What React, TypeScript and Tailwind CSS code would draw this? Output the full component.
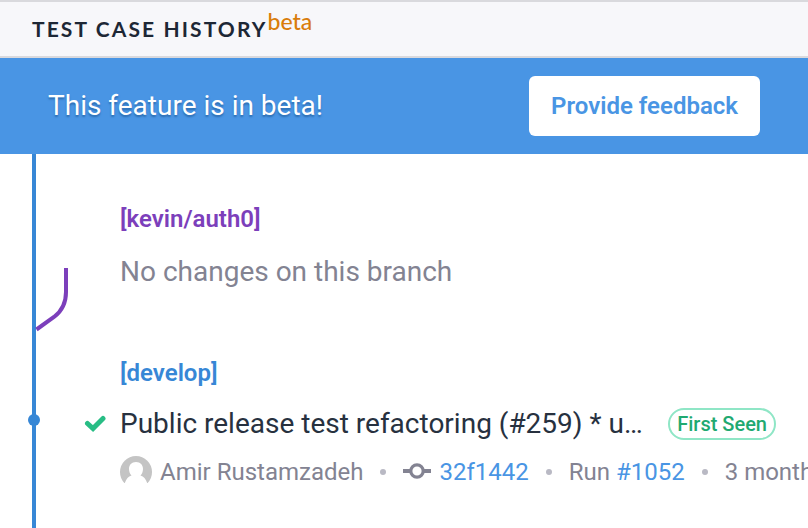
import React from "react";

function BranchGraph() {
  return (
    <svg className="w-[72px] shrink-0 self-stretch" aria-hidden="true">
      <rect x="32" y="0" width="4" height="100%" fill="#3787d6" />
      <circle cx="34" cy="266" r="6" fill="#3787d6" />
      <path
        d="M66 114V138C66 148 62 157 54 163L36.500 175.500"
        fill="none"
        stroke="#7c3fbb"
        strokeWidth="4"
      />
    </svg>
  );
}

function CheckIcon() {
  return (
    <svg viewBox="0 0 22 18" className="h-[18px] w-[22px]" role="img" aria-label="Passed">
      <path d="M3.500 8.500L9 13.500L19 3.500" fill="none" stroke="#28bd85" strokeWidth="5" strokeLinecap="round" strokeLinejoin="miter" />
    </svg>
  );
}

function Avatar() {
  return (
    <svg viewBox="0 0 32 32" className="mr-2 size-8 shrink-0" aria-hidden="true">
      <defs>
        <clipPath id="avatar-clip">
          <path d="M0 0H32V27H0Z" />
        </clipPath>
      </defs>
      <g clipPath="url(#avatar-clip)">
        <circle cx="16" cy="16" r="16" fill="#c4c4c4" />
        <path
          d="M16 6C20.500 6 23 9 23 13C23 15.500 22 18 20.500 19.500C24 20.500 26 23 27.500 28V32H4.500V28C6 23 8 20.500 11.500 19.500C10 18 9 15.500 9 13C9 9 11.500 6 16 6Z"
          fill="#fff"
        />
      </g>
    </svg>
  );
}

function CommitIcon() {
  return (
    <svg viewBox="0 0 28 20" className="mr-2 h-5 w-7 shrink-0" aria-hidden="true">
      <path d="M0 9H7.500M20.500 9H28" stroke="#838392" strokeWidth="4" />
      <circle cx="14" cy="9" r="6.200" fill="none" stroke="#838392" strokeWidth="3.200" />
    </svg>
  );
}

function Dot() {
  return <span className="mx-[17px] size-[6px] shrink-0 rounded-full bg-[#b9b9c4]" />;
}

export default function App() {
  return (
    <div className="flex min-h-screen flex-col overflow-hidden bg-white font-['Roboto',sans-serif] text-[#838392]">
      <header className="flex h-[58px] items-center border-y-2 border-[#d9d9dd] bg-[#f7f7fa] px-8 font-['Lato',sans-serif]">
        <h1 className="text-[21px] font-bold tracking-widest whitespace-nowrap text-[#1d2735] uppercase">
          Test case history
        </h1>
        <span className="mb-4 text-[23px] leading-6 font-medium text-[#d97c0b]">beta</span>
      </header>

      <section className="flex h-24 items-center justify-between bg-[#4995e4] px-12">
        <p className="text-[28px] leading-8 text-white [text-shadow:0_2px_2px_#2b6cb0]">
          This feature is in beta!
        </p>
        <button
          type="button"
          className="h-[60px] rounded-md bg-white px-[22px] text-2xl font-semibold text-[#4995e4]"
        >
          Provide feedback
        </button>
      </section>

      <main className="flex flex-1">
        <BranchGraph />
        <div className="min-w-0 flex-1 pt-[49px] pb-8 whitespace-nowrap">
          <section className="pl-12">
            <h2 className="text-2xl leading-8 font-semibold text-[#7c3fbb]">[kevin/auth0]</h2>
            <p className="mt-[17px] text-[28px] leading-10">No changes on this branch</p>
          </section>

          <section className="mt-[65px]">
            <h2 className="pl-12 text-2xl leading-8 font-semibold text-[#3787d6]">[develop]</h2>
            <div className="mt-[15px] flex items-center pr-8">
              <span className="flex w-12 shrink-0 pl-3">
                <CheckIcon />
              </span>
              <h3 className="min-w-0 flex-1 truncate text-[28px] leading-10 text-[#27313f]">
                Public release test refactoring (#259) * update
              </h3>
              <span className="ml-5 flex h-8 shrink-0 items-center rounded-full border-2 border-[#8fe6c6] px-[7px] text-xl font-medium text-[#1fa971]">
                First Seen
              </span>
            </div>
            <div className="mt-3 flex items-center overflow-hidden pl-12 text-2xl leading-8">
              <Avatar />
              <span>Amir Rustamzadeh</span>
              <Dot />
              <CommitIcon />
              <a href="#32f1442" className="text-[#4995e4]">32f1442</a>
              <Dot />
              <span>
                Run <a href="#1052" className="text-[#4995e4]">#1052</a>
              </span>
              <Dot />
              <span>3 months ago</span>
            </div>
          </section>
        </div>
      </main>
    </div>
  );
}
